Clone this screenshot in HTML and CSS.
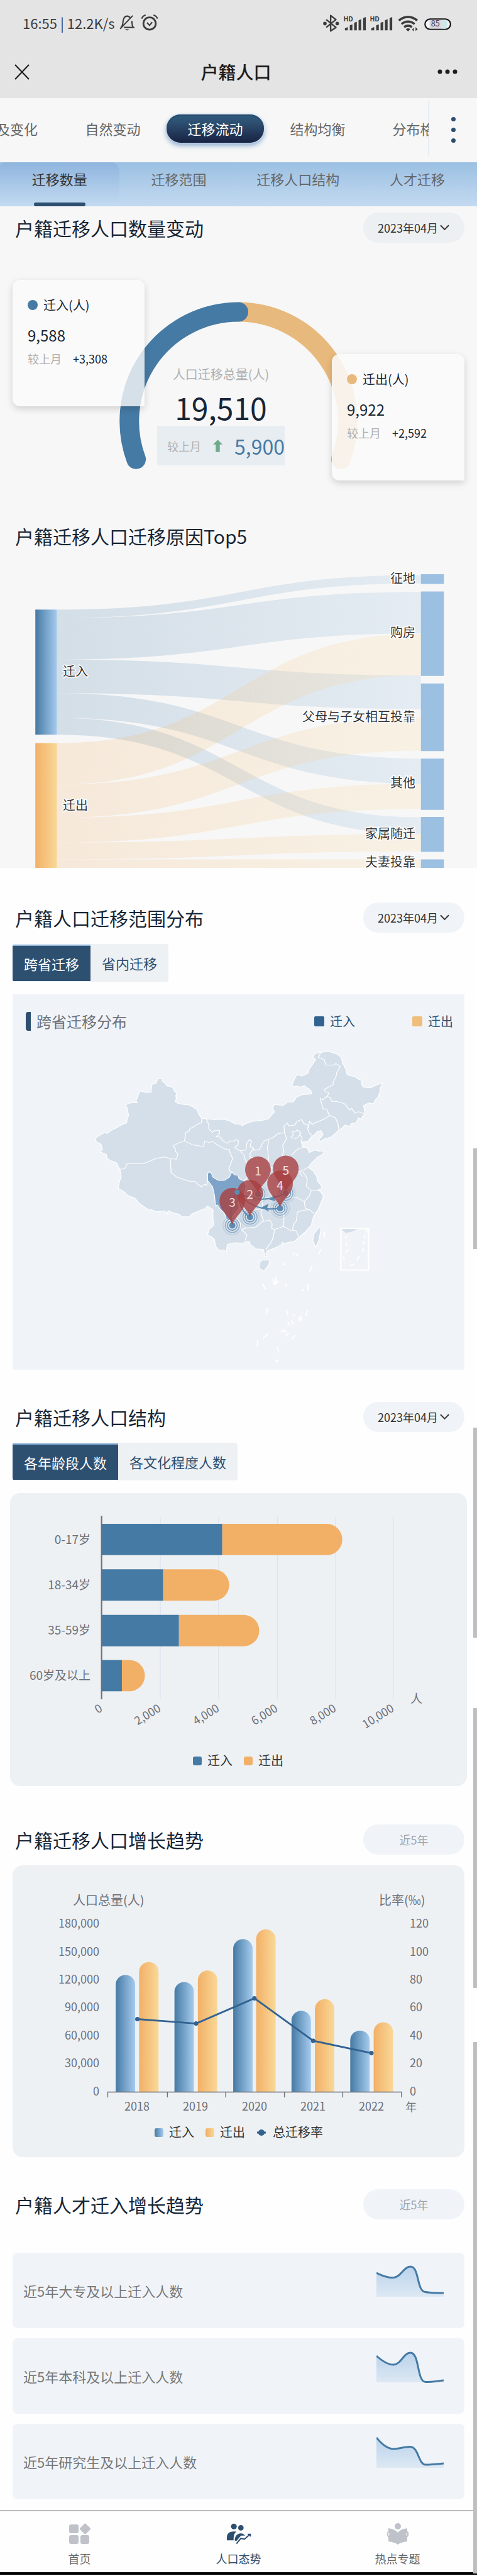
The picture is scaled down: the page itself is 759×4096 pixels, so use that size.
FILE: index.html
```html
<!DOCTYPE html>
<html lang="zh-CN">
<head>
<meta charset="utf-8">
<meta name="viewport" content="width=device-width, initial-scale=1">
<title>户籍人口</title>
<link rel="stylesheet" href="styles.css">
</head>
<body>
<div class="top-area">
  <header class="app-header">
    <div class="status-bar">
      <div class="status-left">
        <span>16:55 | 12.2K/s</span>
        <svg class="icon-bell" viewBox="0 0 36 38" fill="none" stroke="#3c3c3c" stroke-width="3" aria-hidden="true"><path d="M5 30 C9 27 9 22 10 15 C11 8 14 4 19 4 C23 4 25 6 27 9 M30 15 C30 24 31 28 34 30 H12 M32 3 L3 33"/><path d="M14 34 H24 L19 37Z" fill="#3c3c3c" stroke="none"/></svg>
        <svg class="icon-alarm" viewBox="0 0 40 38" fill="none" stroke="#3c3c3c" stroke-width="4" aria-hidden="true"><circle cx="20" cy="21" r="14"/><path d="M14 19 L20 25 L26 18" stroke-width="3"/><path d="M2 10 C4 5 7 3 11 2 M38 10 C36 5 33 3 29 2" stroke-width="3"/></svg>
      </div>
      <svg class="status-icons" viewBox="720 10 320 80" aria-label="蓝牙 信号 无线网络 电量">
        <g fill="none" stroke="#3c3c3c" stroke-width="3.4" stroke-linejoin="round"><path d="M738 43 L760 61 L748 69 V34 L760 43 L738 61"/></g>
        <g fill="#3c3c3c"><circle cx="735" cy="52" r="4"/><circle cx="763" cy="52" r="4"/>
        <path id="sig" d="M780.500 67.500 V63 L787 60 V67.500Z M791.500 67.500 V56 L797.500 54 V67.500Z M801.500 67.500 V50.500 L807.500 48 V67.500Z M811.500 67.500 V44.500 L817.500 42 V67.500Z M822 67.500 V39.500 L828 37 V67.500Z"/><use href="#sig" x="60"/></g>
        <text x="777" y="47.500" class="hd">HD</text><text x="837" y="47.500" class="hd">HD</text>
        <g fill="none" stroke="#3c3c3c" stroke-width="5"><path d="M903 45 Q924 29 945 45"/><path d="M909 53 Q924 42 939 53"/><path d="M915 60 Q924 54 933 60"/></g>
        <path d="M919 65 Q924 61 929 65 L924 70Z M937 61 V70 L933 66Z M941 69 V60 L946 65Z" fill="#3c3c3c"/>
        <rect x="962.500" y="42" width="58" height="23" rx="11.500" fill="#f4f4f4" stroke="#111" stroke-width="3"/>
        <rect x="973" y="43.500" width="38" height="20" fill="#d9d5e0"/><rect x="998" y="43.500" width="15" height="20" rx="5" fill="#cfe6ea"/>
        <text x="976" y="59" class="battery">85</text>
      </svg>
    </div>
    <div class="title-bar">
      <button class="plain" aria-label="关闭"><svg class="close" viewBox="0 0 24 32"><path d="M1 5 L23 28 M23 5 L1 28" stroke="#1d1d1d" stroke-width="2" fill="none"/></svg></button>
      <h1>户籍人口</h1>
      <button class="plain" aria-label="更多"><svg class="more" viewBox="0 0 32 10"><circle cx="4" cy="5" r="3.500"/><circle cx="16" cy="5" r="3.500"/><circle cx="28" cy="5" r="3.500"/></svg></button>
    </div>
  </header>

  <nav class="topics">
    <div class="topic-list">
      <a class="topic first" href="#">及变化</a>
      <a class="topic" href="#">自然变动</a>
      <a class="topic active" href="#"><span>迁移流动</span></a>
      <a class="topic" href="#">结构均衡</a>
      <a class="topic" href="#">分布格局</a>
    </div>
    <button class="plain topic-more" aria-label="全部栏目"><i></i><i></i><i></i></button>
  </nav>
  <nav class="subtabs">
    <a class="active" href="#">迁移数量</a><a href="#">迁移范围</a><a href="#">迁移人口结构</a><a href="#">人才迁移</a>
  </nav>

  <section class="overview">
    <div class="head">
      <h2>户籍迁移人口数量变动</h2>
      <label class="month"><select aria-label="月份"><option>2023年04月</option></select><svg viewBox="0 0 16 10"><path d="M1 1 L8 8 L15 1"/></svg></label>
    </div>
    <div class="gauge">
      <svg class="arc" viewBox="29 550 1022 630" fill="none" stroke-width="44" stroke-linecap="round" aria-hidden="true">
        <path d="M540 705 A247 247 0 0 1 771.500 1038" stroke="#e8b97c"/>
        <path d="M308.500 1038 A247 247 0 0 1 540 705" stroke="#457aa4"/>
      </svg>
      <div class="stat in"><p class="stat-name"><i></i>迁入(人)</p><p class="stat-value">9,588</p><p class="stat-diff"><span>较上月</span>+3,308</p></div>
      <div class="total"><p class="total-name">人口迁移总量(人)</p><p class="total-value">19,510</p>
        <p class="total-diff"><span>较上月</span><svg viewBox="0 0 14 18"><path d="M7 0 L14 7 H10 V18 H4 V7 H0Z" fill="#6faa8c"/></svg><b>5,900</b></p></div>
      <div class="stat out"><p class="stat-name"><i></i>迁出(人)</p><p class="stat-value">9,922</p><p class="stat-diff"><span>较上月</span>+2,592</p></div>
    </div>
    <h2 class="reason-title">户籍迁移人口迁移原因Top5</h2>
    <svg class="sankey" viewBox="0 0 759 488" role="img" aria-label="迁移原因桑基图">
      <defs>
        <linearGradient id="blue"><stop stop-color="#457aa4"/><stop offset="1" stop-color="#a6cbee"/></linearGradient>
        <linearGradient id="gold"><stop stop-color="#f2b067"/><stop offset="1" stop-color="#f9d897"/></linearGradient>
        <linearGradient id="flow-in" gradientUnits="userSpaceOnUse" x1="129" x2="953" y1="0" y2="0"><stop stop-color="#457aa4"/><stop offset="1" stop-color="#9bc0e2"/></linearGradient>
        <linearGradient id="flow-out" gradientUnits="userSpaceOnUse" x1="129" x2="953" y1="0" y2="0"><stop stop-color="#f2b067"/><stop offset="1" stop-color="#f9d897"/></linearGradient>
      </defs>
      <g transform="scale(.7028)">
        <g fill="url(#flow-in)" fill-opacity=".2">
          <path d="M129 110 C541 110 541 32 953 32 V51 C541 51 541 129 129 129Z"/>
          <path d="M129 129 C541 129 541 70 953 70 V164 C541 164 541 223 129 223Z"/>
          <path d="M129 223 C541 223 541 259 953 259 V335 C541 335 541 299 129 299Z"/>
          <path d="M129 299 C541 299 541 447 953 447 V504 C541 504 541 355 129 355Z"/>
          <path d="M129 355 C541 355 541 580 953 580 V618 C541 618 541 393 129 393Z"/>
        </g>
        <g fill="url(#flow-out)" fill-opacity=".2">
          <path d="M129 412 C541 412 541 165 953 165 V259 C541 259 541 506 129 506Z"/>
          <path d="M129 506 C541 506 541 354 953 354 V429 C541 429 541 581 129 581Z"/>
          <path d="M129 581 C541 581 541 504 953 504 V561 C541 561 541 637 129 637Z"/>
          <path d="M129 637 C541 637 541 618 953 618 V657 C541 657 541 675 129 675Z"/>
          <path d="M129 675 H953 V695 H129Z"/>
        </g>
        <rect x="80" y="110" width="49" height="283" fill="url(#blue)"/><rect x="80" y="412" width="49" height="283" fill="url(#gold)"/>
        <path fill="#9bc0e2" d="M953 30 h52 v22 h-52Z M953 69 h52 v191 h-52Z M953 277 h52 v153 h-52Z M953 447 h52 v116 h-52Z M953 579 h52 v79 h-52Z M953 675 h52 v20 h-52Z"/>
      </g>
      <g class="t20 outlined"><text x="100" y="174">迁入</text><text x="100" y="387">迁出</text></g>
      <g class="t20 outlined end"><text x="661" y="26">征地</text><text x="661" y="112">购房</text><text x="661" y="246">父母与子女相互投靠</text><text x="661" y="351">其他</text><text x="661" y="432">家属随迁</text><text x="661" y="477">夫妻投靠</text></g>
    </svg>
  </section>
</div>

<section class="range">
  <div class="head">
    <h2>户籍人口迁移范围分布</h2>
    <label class="month"><select aria-label="月份"><option>2023年04月</option></select><svg viewBox="0 0 16 10"><path d="M1 1 L8 8 L15 1"/></svg></label>
  </div>
  <div class="switch"><button class="on">跨省迁移</button><button>省内迁移</button></div>
  <div class="map-card">
    <div class="map-head"><h3>跨省迁移分布</h3><span class="key"><i></i>迁入</span><span class="key gold"><i></i>迁出</span></div>
    <svg class="map" viewBox="29 2352 1022 749" role="img" aria-label="跨省迁移分布图">
      <g transform="translate(200 2350) scale(.4464 .3571)" class="land">
        <path d="M352 262 L374 262 378 280 390 290 400 308 418 310 432 322 436 340 448 352 444 370 447 385 441 405 455 418 485 425 510 427 530 440 552 458 562 490 576 513 600 515 640 520 690 518 720 530 745 548 772 550 780 558 800 545 830 532 880 525 915 515 930 490 945 472 935 450 942 425 965 428 985 433 1010 410 1040 408 1055 378 1085 362 1110 360 1132 358 1128 335 1110 320 1095 305 1075 315 1060 308 1045 312 1032 302 1045 265 1058 235 1082 245 1100 235 1115 225 1118 205 1125 190 1140 165 1153 140 1138 122 1150 102 1175 95 1215 88 1245 98 1265 108 1283 130 1290 165 1305 200 1313 238 1350 248 1370 265 1388 272 1385 292 1393 315 1430 318 1462 300 1492 288 1480 320 1478 345 1470 375 1455 395 1445 420 1420 415 1395 432 1400 460 1402 490 1390 498 1385 520 1370 508 1358 540 1335 545 1325 562 1300 555 1285 575 1270 585 1255 605 1230 630 1200 640 1175 660 1168 650 1190 615 1180 590 1160 595 1152 610 1135 625 1115 655 1085 660 1085 690 1110 698 1120 728 1150 712 1170 720 1198 718 1188 740 1160 760 1135 790 1115 822 1140 845 1150 865 1158 880 1165 915 1185 945 1180 958 1165 965 1180 980 1192 1005 1180 1045 1165 1090 1150 1115 1140 1140 1130 1190 1115 1210 1100 1230 1068 1265 1045 1290 1010 1298 990 1305 985 1295 980 1310 960 1325 910 1350 900 1370 908 1388 895 1385 888 1342 850 1338 820 1310 818 1292 800 1292 780 1305 760 1300 740 1300 705 1310 700 1358 685 1345 660 1345 645 1320 640 1280 625 1262 605 1250 612 1215 635 1190 632 1140 632 1090 605 1068 590 1085 575 1090 548 1105 530 1115 510 1135 475 1135 460 1118 430 1110 405 1095 400 1120 390 1098 345 1103 320 1090 300 1085 275 1065 255 1045 235 1015 200 1000 180 975 152 955 158 915 168 880 160 835 145 795 115 780 95 765 92 740 60 725 72 708 65 675 40 660 38 635 60 618 85 602 95 608 115 590 130 580 150 568 170 552 195 540 198 510 205 495 200 465 195 440 188 428 215 415 248 413 242 400 252 370 262 338 290 348 318 348 323 298 345 288Z"/>
        <path d="M880 1410 L920 1410 915 1440 890 1478 865 1460 868 1425Z M1172 1200 L1180 1210 1170 1280 1153 1330 1138 1285 1145 1240Z"/>
        <path class="sichuan" d="M610 850 L625 860 632 885 660 905 690 905 715 885 728 850 740 868 758 872 765 895 790 908 800 940 790 1000 760 1040 765 1080 740 1120 715 1160 700 1150 690 1110 670 1090 655 1060 645 1065 640 1000 630 945 605 905 605 865Z"/>
        <path fill="none" d="M576 513 L574 540 548 552 540 562 515 578 510 597 495 600 488 655 465 665 430 685 442 705 442 722 455 735 447 770 416 768 385 756 340 768 305 788 275 800 240 798 198 800 185 832 160 835 M598 517 L610 550 612 580 630 600 640 588 665 588 665 612 648 628 670 632 685 658 705 670 720 655 740 655 750 645 762 655 758 680 742 698 770 718 800 712 803 670 818 645 827 658 820 690 838 700 840 715 868 708 885 665 905 645 930 640 960 610 995 603 992 560 1010 540 1015 560 1045 555 1060 530 1082 520 1092 545 1115 555 1112 580 M488 655 L510 668 530 680 585 690 590 655 612 665 630 658 655 680 690 705 715 710 720 735 732 765 722 800 712 830 720 850 M416 768 L420 855 450 885 470 892 510 910 540 910 560 935 575 945 590 930 600 935 606 900 M770 718 L790 745 795 770 805 800 808 840 812 880 790 908 M838 700 L820 735 820 760 850 762 865 800 M915 650 L908 700 914 760 912 800 928 830 910 880 880 935 M995 603 L1005 640 985 685 992 720 975 770 M1060 585 L1050 595 1035 598 1040 615 1028 635 1050 640 1065 630 1078 605Z M1075 618 L1085 640 1078 655 1085 680 M1112 580 L1118 600 1132 620 M1115 570 L1122 530 1135 550 1160 535 1190 520 1225 495 M1225 495 L1252 508 1265 540 1270 585 M1225 495 L1215 475 1210 455 1190 450 1183 420 1175 385 1190 395 1205 375 1225 378 1235 405 1260 405 1300 420 1325 460 1335 448 1352 480 1370 470 1400 485 M1210 375 L1220 350 1205 345 1195 330 1240 300 1243 280 1255 250 1260 220 1278 185 1255 165 1245 175 1205 175 1195 140 1165 125 1178 98 M1110 695 L1070 700 1050 720 1030 745 M1115 822 L1090 840 1070 850 1030 840 M925 820 L1000 870 1070 850 1085 880 M1085 850 L1100 870 1110 900 1105 940 1130 970 1170 970 M1130 970 L1120 1005 1095 1040 1100 1080 1120 1090 1145 1115 M880 1020 L930 1012 990 1025 1020 1010 1060 1015 1095 1040 M985 1080 L992 1130 990 1200 M1120 1090 L1085 1095 1060 1105 1055 1160 1040 1185 1035 1220 1055 1225 1068 1265 M945 1215 L970 1205 990 1195 1010 1210 1030 1225 M880 940 L875 980 885 1080 875 1110 888 1160 850 1200 810 1205 775 1215 805 1250 795 1285 M885 1165 L920 1155 932 1180 930 1210 945 1215 938 1260 930 1290 900 1345 M740 1120 L770 1170 775 1215 M765 1080 L800 1100 850 1090 885 1080 M800 1000 L850 1000 880 940"/>
        <path class="box" d="M1280 1210 H1421 V1472 H1280Z"/>
        <path class="land-part" d="M1282 1212 H1365 L1340 1228 1305 1238Z"/>
        <path class="dash" d="M1308 1255 l-5 18 M1305 1300 l6 20 M1317 1342 l-12 18 M1293 1388 l5 20 M1325 1444 l24 -8 M1362 1408 l12 -22 M1391 1355 l5 -20 M1396 1308 v-20 M1396 1270 l8 -20 M1408 1235 l5 -20 M1198 1230 l-3 35 M1180 1342 l-14 30 M1135 1445 l-12 38 M1038 1362 l6 12 M1056 1370 l4 14 M990 1425 v14"/>
      </g>
      <path class="dash" d="M595 2907 l6 12 M697 2908 v14 M682 2920 l6 2 M618 2895 l4 14 M625 2892 v16 M630 2902 l-12 4 M646 2908 l4 4 M606 2962 l-3 12 M696 2966 l-4 14 M649 2968 l2 10 M668 2976 l-4 5 M684 2984 l-8 6 M651 2994 l4 6 M660 2990 l4 8 M640 3010 l8 6 M636 3016 l6 -5 M654 3018 l-8 8 M668 3022 l-6 10 M606 3020 l-10 10 M583 3035 v14 M628 3050 l3 12 M622 3083 l8 -3 M676 2986 l6 -6 M640 2862 l4 2"/>
      <g fill="none" stroke="#5b8bb2" stroke-width="3"><path d="M537 2700 Q576 2746 633 2736 M537 2700 Q590 2730 647 2702 M537 2700 Q545 2745 566 2756 M537 2700 Q515 2735 526 2775"/></g>
      <path d="M592 2734 l16 -8 -3 8 4 10Z M608 2716 l14 -10 0 10 2 4Z" fill="#5b8bb2"/>
      <defs><g id="ring"><circle r="21" opacity=".2"/><circle r="16" opacity=".6"/><circle r="11" opacity=".9"/><circle r="6" fill="#5b8bb2"/></g>
      <path id="pin" d="M0 56 C-2 38 -29 25 -29 0 A29 29 0 0 1 29 0 C29 25 2 38 0 56Z"/></defs>
      <g fill="none" stroke="#5b8bb2" stroke-width="2"><use href="#ring" x="584" y="2704"/><use href="#ring" x="647" y="2702"/><use href="#ring" x="634" y="2736"/><use href="#ring" x="566" y="2756"/><use href="#ring" x="526" y="2775"/></g>
      <g fill="#a83e40" fill-opacity=".8"><use href="#pin" x="584" y="2648"/><use href="#pin" x="647" y="2646"/><use href="#pin" x="634" y="2680"/><use href="#pin" x="566" y="2701"/><use href="#pin" x="526" y="2719"/></g>
      <circle cx="537" cy="2700" r="6" fill="#5b8bb2"/>
      <g class="pin-text"><text x="584" y="2650">1</text><text x="647" y="2648">5</text><text x="634" y="2682">4</text><text x="566" y="2703">2</text><text x="526" y="2721">3</text></g>
    </svg>
  </div>
</section>

<section class="structure">
  <div class="head">
    <h2>户籍迁移人口结构</h2>
    <label class="month"><select aria-label="月份"><option>2023年04月</option></select><svg viewBox="0 0 16 10"><path d="M1 1 L8 8 L15 1"/></svg></label>
  </div>
  <div class="switch"><button class="on">各年龄段人数</button><button>各文化程度人数</button></div>
  <svg class="chart wide" viewBox="16 0 727 466" role="img" aria-label="各年龄段迁移人数">
    <g transform="translate(0 -2375) scale(.7028)">
      <path d="M363 3433 V3845 M495 3433 V3845 M628 3433 V3845 M760 3433 V3845 M891 3433 V3845" stroke="#dde4ef" stroke-width="2"/>
      <g fill="#f2b067"><path d="M503 3449 H739.500 a35.500 35.500 0 0 1 0 71 H503Z M368 3552 H483.500 a35.500 35.500 0 0 1 0 71 H368Z M405 3655 H551.500 a35.500 35.500 0 0 1 0 71 H405Z M276 3757 H292.500 a35.500 35.500 0 0 1 0 71 H276Z"/></g>
      <path fill="#457aa4" d="M230 3449 H503 v71 H230Z M230 3552 H369 v71 H230Z M230 3655 H405 v71 H230Z M230 3757 H276 v71 H230Z"/>
      <path d="M230 3431 V3846" stroke="#6e7079" stroke-width="3"/>
    </g>
    <g class="t19 axis end"><text x="144" y="72">0-17岁</text><text x="144" y="144">18-34岁</text><text x="144" y="216">35-59岁</text><text x="144" y="288">60岁及以上</text></g>
    <g class="t18 axis end"><text transform="translate(160 339) rotate(-32)">0</text><text transform="translate(253 339) rotate(-32)">2,000</text><text transform="translate(346 339) rotate(-32)">4,000</text><text transform="translate(439 339) rotate(-32)">6,000</text><text transform="translate(532 339) rotate(-32)">8,000</text><text transform="translate(624 339) rotate(-32)">10,000</text></g>
    <text class="t19 axis" x="653" y="325">人</text>
    <rect x="307" y="419" width="14" height="14" rx="3" fill="#457aa4"/><rect x="388" y="419" width="14" height="14" rx="3" fill="#f2b067"/>
    <g class="t20"><text x="330" y="424">迁入</text><text x="411" y="424">迁出</text></g>
  </svg>
</section>

<section class="trend">
  <div class="head"><h2>户籍迁移人口增长趋势</h2><button class="period" disabled>近5年</button></div>
  <svg class="chart" viewBox="20 0 719 464" role="img" aria-label="近5年迁移人口">
    <g transform="translate(0 -2968) scale(.7028)">
      <g fill="url(#blue)"><path d="M262 4736 V4493 a22 22 0 0 1 44 0 V4736Z"/><path d="M395 4736 V4509 a22 22 0 0 1 44 0 V4736Z"/><path d="M528 4736 V4412 a22 22 0 0 1 44 0 V4736Z"/><path d="M660 4736 V4574 a22 22 0 0 1 44 0 V4736Z"/><path d="M793 4736 V4619 a22 22 0 0 1 44 0 V4736Z"/></g>
      <g fill="url(#gold)"><path d="M315 4736 V4464 a22 22 0 0 1 44 0 V4736Z"/><path d="M448 4736 V4483 a22 22 0 0 1 44 0 V4736Z"/><path d="M580 4736 V4390 a22 22 0 0 1 44 0 V4736Z"/><path d="M713 4736 V4548 a22 22 0 0 1 44 0 V4736Z"/><path d="M846 4736 V4600 a22 22 0 0 1 44 0 V4736Z"/></g>
      <path d="M244 4748 V4736 H909 V4748 M379 4736 V4748 M511 4736 V4748 M644 4736 V4748 M776 4736 V4748" fill="none" stroke="#6e7079" stroke-width="2"/>
      <path d="M311 4571 L444 4581 L576 4524 L709 4620 L841 4648" fill="none" stroke="#326290" stroke-width="4"/>
      <g fill="#326290"><circle cx="311" cy="4571" r="5"/><circle cx="444" cy="4581" r="5"/><circle cx="576" cy="4524" r="5"/><circle cx="709" cy="4620" r="5"/><circle cx="841" cy="4648" r="5"/></g>
    </g>
    <g class="t20 axis"><text x="116" y="54">人口总量(人)</text><text x="603" y="54">比率(‰)</text></g>
    <g class="t18 axis end"><text x="158" y="91">180,000</text><text x="158" y="136">150,000</text><text x="158" y="180">120,000</text><text x="158" y="224">90,000</text><text x="158" y="269">60,000</text><text x="158" y="313">30,000</text><text x="158" y="358">0</text></g>
    <g class="t18 axis"><text x="652" y="91">120</text><text x="652" y="136">100</text><text x="652" y="180">80</text><text x="652" y="224">60</text><text x="652" y="269">40</text><text x="652" y="313">20</text><text x="652" y="358">0</text><text x="645" y="383">年</text></g>
    <g class="t18 axis middle"><text x="218" y="382">2018</text><text x="311" y="382">2019</text><text x="405" y="382">2020</text><text x="498" y="382">2021</text><text x="591" y="382">2022</text></g>
    <rect x="246" y="418" width="14" height="14" rx="3" fill="url(#blue)"/><rect x="327" y="418" width="14" height="14" rx="3" fill="url(#gold)"/>
    <path d="M409 425 H423" stroke="#326290" stroke-width="3"/><circle cx="416" cy="425" r="5" fill="#326290"/>
    <g class="t20"><text x="269" y="423">迁入</text><text x="350" y="423">迁出</text><text x="434" y="423">总迁移率</text></g>
  </svg>
</section>

<section class="talent">
  <div class="head"><h2>户籍人才迁入增长趋势</h2><button class="period" disabled>近5年</button></div>
  <svg width="0" height="0" class="defs"><defs><linearGradient id="fade" x2="0" y2="1"><stop stop-color="#b9d3ec"/><stop offset="1" stop-color="#dde8f3"/></linearGradient></defs></svg>
  <div class="talent-list">
    <div class="talent-card"><p>近5年大专及以上迁入人数</p><svg viewBox="0 0 107 54"><path fill="url(#fade)" d="M0 14 C10 19 20 22 27 21.600 C39 21 43 4 54 4 C68 4 64 40 76 44 C84 46 96 46 107 46 V52 H0Z"/><path class="line" d="M0 14 C10 19 20 22 27 21.600 C39 21 43 4 54 4 C68 4 64 40 76 44 C84 46 96 46 107 46"/></svg></div>
    <div class="talent-card"><p>近5年本科及以上迁入人数</p><svg viewBox="0 0 107 54"><path fill="url(#fade)" d="M0 10 C9 18 18 24 27 24 C39 24 43 5 54 5 C69 5 64 51 78 51.500 C88 51.500 97 50 107 49 V52 H0Z"/><path class="line" d="M0 10 C9 18 18 24 27 24 C39 24 43 5 54 5 C69 5 64 51 78 51.500 C88 51.500 97 50 107 49"/></svg></div>
    <div class="talent-card"><p>近5年研究生及以上迁入人数</p><svg viewBox="0 0 107 54"><path fill="url(#fade)" d="M0 4 C9 15 18 22 27 22 C36 22 45 18 54 18.500 C67 19 67 47 78 47 C88 47 97 46 107 45 V52 H0Z"/><path class="line" d="M0 4 C9 15 18 22 27 22 C36 22 45 18 54 18.500 C67 19 67 47 78 47 C88 47 97 46 107 45"/></svg></div>
  </div>
</section>

<nav class="tabbar">
  <a href="#"><svg viewBox="0 0 36 34" fill="#bfc2c9"><rect x="1" y="2" width="15" height="14" rx="3"/><rect x="1" y="19" width="15" height="14" rx="3"/><rect x="19" y="19" width="14" height="14" rx="3"/><rect x="20" y="2.500" width="13" height="13" rx="2" transform="rotate(45 26.500 9)"/></svg>首页</a>
  <a class="active" href="#"><svg viewBox="60 40 180 156" fill="#2d4f70"><circle cx="114" cy="64" r="21"/><circle cx="165" cy="74" r="20"/><path d="M63 165 V140 C65 115 82 102 110 101 H132 C116 115 112 130 112 165Z"/><path d="M120 165 C122 135 135 115 165 114 C180 114 188 122 196 131 L166 131 L131 172Z"/><path d="M133 190 L165 151 L191 157 L231 121" fill="none" stroke="#fff" stroke-width="20"/><path d="M133 190 L165 151 L191 157 L231 121 M215 121 H234 V138" fill="none" stroke="#2d4f70" stroke-width="9"/></svg>人口态势</a>
  <a href="#"><svg viewBox="0 0 36 34" fill="#bfc2c9"><circle cx="18" cy="5" r="5"/><path d="M18 15 C14 10 8 9 3 8 V13 C0 13 0 22 3 22 V29 C9 30 14 31 18 34 C22 31 27 30 33 29 V22 C36 22 36 13 33 13 V8 C28 9 22 10 18 15Z"/><path d="M3 15 c2 0 2 5 0 5 M33 15 c-2 0 -2 5 0 5" fill="#fff"/></svg>热点专题</a>
</nav>
<i class="thumb a"></i><i class="thumb b"></i><i class="thumb c"></i><i class="thumb d"></i>
</body>
</html>
```

FILE: styles.css
```css
* { box-sizing: border-box; margin: 0; padding: 0; }
body {
  position: relative;
  background: #fefefe;
  color: #333;
  font-family: "Noto Sans CJK SC", "Noto Sans", sans-serif;
  font-size: 20px;
}
a { color: inherit; text-decoration: none; }
button, select { font: inherit; color: inherit; border: 0; background: none; }
i { font-style: normal; }
svg { display: block; }
h1, h2, h3 { font-weight: 400; }
.plain { display: flex; align-items: center; }

.top-area { background: #f7f7f7; overflow: hidden; }
.app-header { background: #e4e4e4; height: 156px; }
.status-bar { display: flex; justify-content: space-between; align-items: center; height: 72px; padding: 0 28px 0 36px; }
.status-left { display: flex; align-items: center; font-size: 22px; color: #3c3c3c; }
.icon-bell { width: 25px; height: 36px; margin-left: 6px; }
.icon-alarm { width: 28px; height: 36px; margin-left: 10px; }
.status-icons { width: 225px; height: 56px; }
.hd { font-size: 15px; font-weight: 700; fill: #3c3c3c; }
.battery { font-size: 18px; fill: #4b3f48; }
.title-bar { display: grid; grid-template-columns: 1fr auto 1fr; align-items: center; height: 84px; padding: 0 31px 0 23px; }
.title-bar h1 { font-size: 28px; font-weight: 500; color: #1d1d1d; }
.title-bar button:last-child { justify-self: end; }
.close { width: 24px; height: 32px; }
.more { width: 32px; height: 10px; fill: #1d1d1d; }

.topics { display: flex; height: 102px; }
.topic-list { display: flex; flex: 1; overflow: hidden; margin-block: 4px 10px; border-right: 1px solid #c3d6e6; }
.topic { flex: 0 0 163px; display: flex; align-items: center; justify-content: center; font-size: 22px; color: #666; }
.topic.first { margin-left: -65px; justify-content: flex-end; padding-right: 38px; }
.topic.active { color: #fff; }
.topic span {
  display: grid; place-items: center; width: 155px; height: 45px; border-radius: 22px;
  background: linear-gradient(#2f5b80, #2d4f70 30%, #182243);
  box-shadow: inset 0 2px 2px #234a6b, 0 0 0 1px #d3dfef, 0 4px 8px #7fa3cb;
}
.topic-more { flex: 0 0 76px; flex-direction: column; justify-content: center; gap: 10px; padding-bottom: 2px; }
.topic-more i { width: 7px; height: 7px; border-radius: 50%; background: #2d4f70; }

.subtabs { display: grid; grid-template-columns: repeat(4, 1fr); height: 70px; background: linear-gradient(#9bc0e2, #c3daf1); }
.subtabs a { display: grid; justify-items: center; align-content: space-between; line-height: 52px; font-size: 22px; color: #666; }
.subtabs .active { color: #333; border-radius: 8px 14px 0 0; background: linear-gradient(#8fb5de, #c3daf1); }
.subtabs .active::after { content: ""; width: 82px; height: 6px; border-radius: 3px; background: #2d4f70; }

section { padding: 0 20px; }
.overview { padding-top: 10px; }
.head { display: flex; justify-content: space-between; align-items: center; height: 48px; padding-left: 4px; }
h2 { font-size: 30px; line-height: 44px; color: #172636; }
.month { display: flex; align-items: center; width: 161px; height: 48px; padding: 0 23px; border-radius: 24px; background: #f0f4f8; }
.overview .month { background: #edf0f3; }
.month select { appearance: none; width: 99px; font-size: 18px; line-height: 26px; color: #333; }
.month svg { width: 15px; height: 10px; fill: none; stroke: #333; stroke-width: 2; }
.period { width: 161px; height: 48px; border-radius: 24px; background: #f0f4f8; font-size: 18px; color: #a0a4aa; }

.gauge { display: grid; grid-template-columns: 210px 1fr 211px; margin-top: 1px; line-height: 28px; }
.arc { grid-area: 1 / 1 / 2 / 4; width: 100%; }
.stat { grid-row: 1; align-self: start; height: 201px; padding: 26px 24px; border-radius: 12px 12px 0 12px; background: rgba(250, 250, 250, .8); box-shadow: 0 4px 12px rgba(0, 0, 0, .16); z-index: 1; color: #172636; }
.in { grid-column: 1; margin-top: 58px; }
.out { grid-column: 3; margin-top: 176px; background: rgba(250, 250, 250, .87); }
.stat-name { display: flex; align-items: center; gap: 9px; }
.stat-name i { width: 16px; height: 16px; border-radius: 50%; background: #457aa4; }
.out i { background: #e8b97c; }
.stat-value { margin-top: 18px; font-size: 24px; line-height: 32px; }
.stat-diff { display: flex; gap: 18px; margin-top: 7px; font-size: 18px; }
.stat-diff span, .total-diff span, .total-name { color: #b0b0b0; }
.total { grid-area: 1 / 2; justify-self: start; margin: 194px 0 0 20px; width: 203px; text-align: center; }
.total-value { margin-top: 8px; font-size: 48px; line-height: 60px; color: #172636; }
.total-diff { display: flex; align-items: center; justify-content: space-between; height: 63px; padding-left: 16px; background: #e8edf1; font-size: 18px; }
.total-diff svg { width: 15px; height: 20px; }
.total-diff b { font-size: 32px; font-weight: 400; color: #457aa4; }
.reason-title { padding-left: 4px; }
.sankey { width: calc(100% + 40px); margin: 18px -20px 0; }

text { dominant-baseline: central; fill: #333; }
.hd, .battery { dominant-baseline: auto; }
.t18 { font-size: 18px; }
.t19 { font-size: 19px; }
.t20 { font-size: 20px; }
.axis text, text.axis { fill: #6e7079; }
.end { text-anchor: end; }
.middle { text-anchor: middle; }
.outlined text { stroke: #fff; stroke-width: 3px; paint-order: stroke; }

.range { padding-top: 55px; }
.switch { display: inline-flex; vertical-align: top; height: 60px; margin-top: 17px; padding: 1px 0; border-radius: 4px; background: #edf1f4; overflow: hidden; font-size: 22px; color: #2d4f70; }
.switch button { padding: 0 18px; }
.switch .on { background: #2d4f70; color: #fff; border-top: 2px solid #8fb5de; }
.map-card { margin-top: 20px; padding-top: 28px; background: #f0f4f8; }
.range .switch { margin-top: 18px; }
.map-head { display: flex; align-items: center; height: 30px; margin: 0 18px 12px 21px; }
.map-head h3 { flex: 1; padding-left: 9px; border-left: 8px solid #2d4f70; border-radius: 4px; font-size: 24px; line-height: 30px; color: #6e7079; }
.key { display: flex; align-items: center; gap: 9px; line-height: 26px; color: #2d4f70; }
.key i { width: 16px; height: 16px; border-radius: 2px; background: #326290; }
.key.gold { margin-left: 91px; }
.gold i { background: #f0be7b; }
.map, .chart { width: 100%; }
.land { fill: #d5dfe9; stroke: #fff; stroke-width: 4px; stroke-linejoin: round; }
.sichuan { fill: #7fa3c8; }
.box { fill: none; stroke-width: 7px; }
.land-part { stroke: none; }
.dash { fill: none; stroke: #fff; stroke-width: 3px; }
.land .dash { stroke-width: 7px; }
.pin-text text { font-size: 27px; text-anchor: middle; fill: #f4e3e4; }

.structure { padding: 51px 16px 0; }
.structure .head, .structure .switch { margin-inline: 4px; }
.chart { border-radius: 16px; background: #edf1f4; margin-top: 17px; }
.chart.wide { margin-top: 20px; }
.trend { padding-top: 61px; }
.talent { padding-top: 51px; }
.defs { position: absolute; }
.talent-list { display: grid; gap: 16px; margin-top: 53px; }
.talent-card { display: flex; justify-content: space-between; height: 120px; padding: 18px 33px 18px 17px; border-radius: 8px; background: #f0f4f8; }
.talent-card p { align-self: center; font-size: 22px; line-height: 32px; color: #777; }
.talent-card svg { width: 107px; height: 54px; }
.line { fill: none; stroke: #457aa4; stroke-width: 3; }

.tabbar { display: grid; grid-template-columns: repeat(3, 1fr); height: 103px; margin-top: 17px; border-top: 2px solid #bbb; border-bottom: 4px solid #000; background: #fefefe; font-size: 18px; color: #666; }
.tabbar a { display: grid; justify-items: center; align-content: start; gap: 9px; padding-top: 19px; line-height: 26px; }
.tabbar svg { width: 36px; height: 34px; }
.tabbar .active { color: #2d4f70; }
.tabbar .active svg { width: 42px; }

.thumb { position: absolute; right: 0; width: 6px; background: #bfbfbf; }
.a { top: 1826px; height: 160px; }
.b { top: 2270px; height: 334px; }
.c { top: 2716px; height: 445px; }
.d { top: 3247px; height: 845px; }
```
